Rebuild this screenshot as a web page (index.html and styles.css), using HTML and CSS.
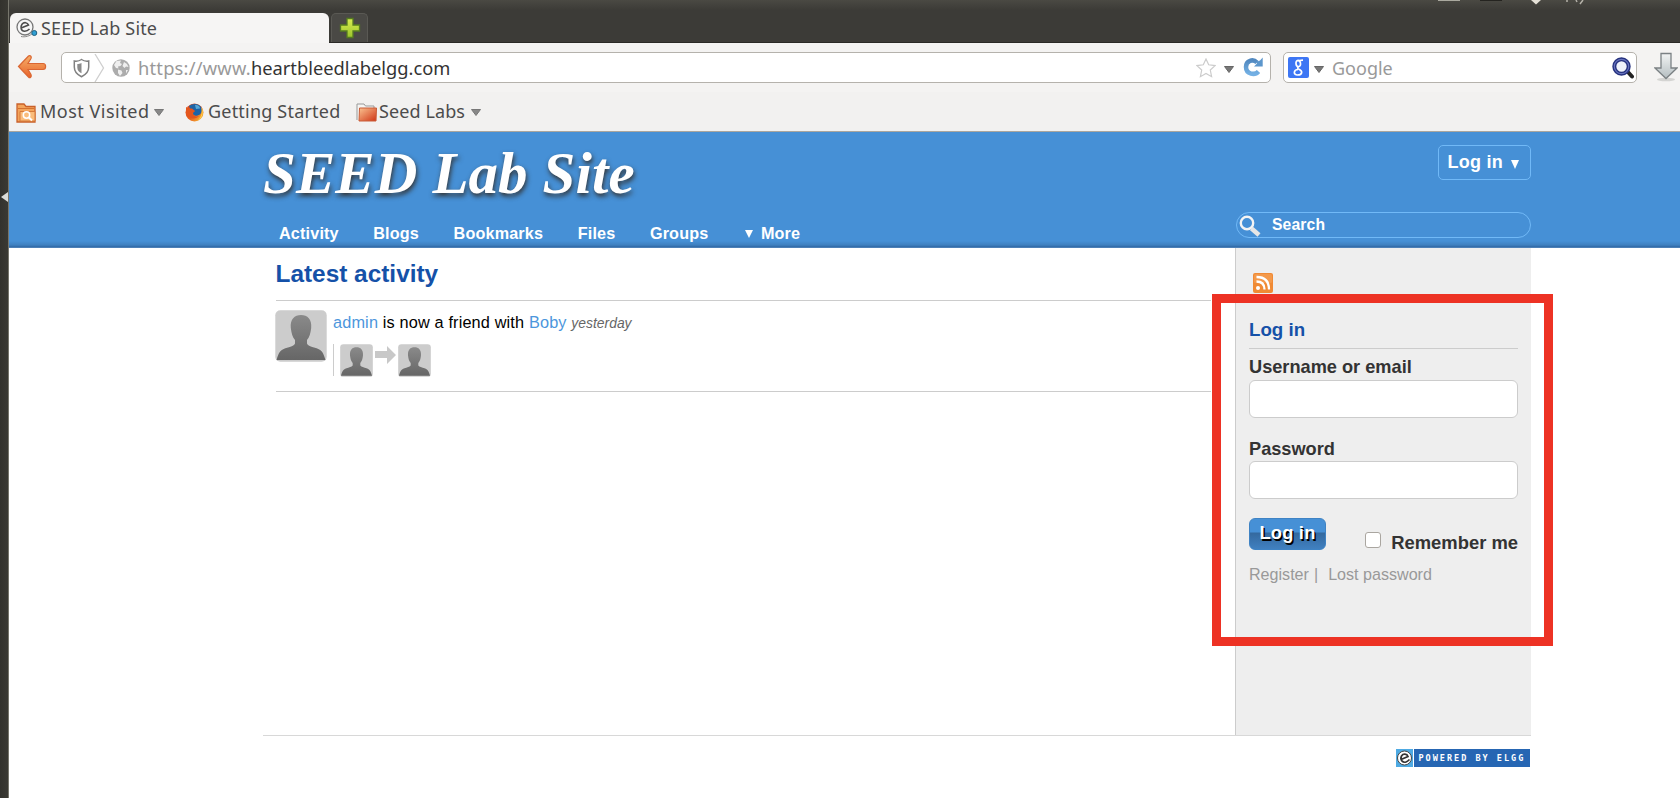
FILE: index.html
```html
<!DOCTYPE html>
<html lang="en">
<head>
<meta charset="utf-8">
<title>SEED Lab Site</title>
<link rel="stylesheet" href="styles.css">
</head>
<body>
<svg class="defs" width="0" height="0">
  <defs>
    <linearGradient id="gPerson" x1="0" y1="0" x2="0" y2="1"><stop offset="0" stop-color="#8a8a8a"/><stop offset="1" stop-color="#666"/></linearGradient>
    <linearGradient id="gOrange" x1="0" y1="0" x2="0" y2="1"><stop offset="0" stop-color="#f6b06a"/><stop offset="1" stop-color="#e8622a"/></linearGradient>
    <linearGradient id="gFolder" x1="0" y1="0" x2="1" y2="1"><stop offset="0" stop-color="#fbc391"/><stop offset="1" stop-color="#cf3414"/></linearGradient>
    <linearGradient id="gGreen" x1="0" y1="0" x2="0" y2="1"><stop offset="0" stop-color="#d8ec50"/><stop offset="1" stop-color="#9cc52c"/></linearGradient>
    <linearGradient id="gGrey" x1="0" y1="0" x2="0" y2="1"><stop offset="0" stop-color="#f2f4f4"/><stop offset="1" stop-color="#b4bdc0"/></linearGradient>
    <linearGradient id="gBlue" x1="0" y1="0" x2="0" y2="1"><stop offset="0" stop-color="#5289c0"/><stop offset="1" stop-color="#73b0e4"/></linearGradient>
    <linearGradient id="gFox" x1="0" y1="0" x2="1" y2="1"><stop offset="0" stop-color="#d9401c"/><stop offset=".55" stop-color="#e8611d"/><stop offset="1" stop-color="#f9ca3c"/></linearGradient>
    <symbol id="avatar" viewBox="0 0 52 52">
      <rect x=".3" y=".3" width="51.4" height="51.4" rx="5" fill="#ccc"/>
      <path d="M1.5 50C4 42 5 39.500 13 37.500C18 36 19.500 35 20 33.500V30C17.500 27 16.500 23.500 15.800 18C15 9 19.500 5 26 5S37 9 36.200 18C35.500 23.500 34.500 27 32 30V33.500C32.500 35 34 36 39 37.500C47 39.500 48 42 50.500 50Z" fill="url(#gPerson)"/>
    </symbol>
  </defs>
</svg>
<div class="desktop">
  <div class="edge"><svg class="edge-mark" width="7" height="10" viewBox="0 0 7 10"><path d="M7 0V10L0 5Z" fill="#dcdcd8"/></svg></div>
  <div class="window">
    <div class="tabstrip">
      <div class="tab">
        <svg width="22" height="20" viewBox="0 0 22 20"><circle cx="9" cy="9" r="8" fill="#f7f7f7" stroke="#777" stroke-width="1.300"/><path d="M4.500 10.200L12.500 7C11.500 4.300 8 3.800 6 6.200C4 9 5 13 8.500 13.200C10.500 13.300 12 12.500 13.500 11" fill="none" stroke="#4c4c4c" stroke-width="1.600"/><path d="M5 18.500C9 19.500 14 18 17 15" stroke="#888" fill="none"/><circle cx="18.300" cy="15" r="2.500" fill="#2f9fd4" stroke="#21617f"/></svg>
        <span>SEED Lab Site</span>
      </div>
      <div class="newtab"><svg width="22" height="22" viewBox="0 0 22 22"><path d="M8 1.500H14V8H20.500V14H14V20.500H8V14H1.500V8H8Z" fill="url(#gGreen)" stroke="#557b21" stroke-width="1.300"/></svg></div>
      <div class="tray">
        <svg width="150" height="5" viewBox="0 0 150 5"><path d="M0 0H22V1H0Z" fill="#aaa99f"/><path d="M42 0H64V1H42Z" fill="#252420"/><path d="M93 0H103L98 4.500Z" fill="#e5e1d7"/><path d="M129 0V2M138 0L139 2M145 0L142 4" stroke="#b4b1a8" stroke-width="1.500"/></svg>
      </div>
    </div>
    <div class="navbar">
      <svg class="back" width="30" height="26" viewBox="0 0 30 26"><path d="M1.500 12.500L11.500 2C13 .8 15 2.500 14 4.500L11 9.500H26C29.500 9.500 29.500 15.500 26 15.500H11L14 20.500C15 23 13 24.500 11.500 23Z" fill="url(#gOrange)" stroke="#da6632" stroke-width="1.200"/></svg>
      <div class="urlbar">
        <svg class="identity" width="58" height="28" viewBox="0 0 58 28">
          <path d="M19.500 5.500C17 7.200 14 7.300 12.300 7V13C12.300 18 15.500 20.800 19.500 22.700C23.500 20.800 26.700 18 26.700 13V7C25 7.300 22 7.200 19.500 5.500Z" fill="#fff" stroke="#808080" stroke-width="1.500"/><path d="M19.500 9C18 9.900 16.500 10 15.300 10V13.500C15.300 16.500 17 18 19.500 19.300Z" fill="#8a8a8a"/>
          <path d="M33 0L41.500 14L33 28" fill="none" stroke="#cfcfcf" stroke-width="1.300"/>
        </svg>
        <svg class="globe" width="18" height="18" viewBox="0 0 18 18"><circle cx="9" cy="9" r="8.700" fill="#acacac"/><path d="M4.500 2L9 1.500L8 4L10 5L8.500 7L6 7.500L6.500 9.500L4 9L2 6ZM12 3L15 5L16.500 8L14 7.500L12.500 9L10.500 7ZM6 10.500L9.500 11.500L10.500 14L8 17L6 14ZM14 11L16 11L14 14.500Z" fill="#efefef"/></svg>
        <span class="url"><span class="scheme">https://www.</span><span class="host">heartbleedlabelgg.com</span></span>
        <svg class="star" width="20" height="20" viewBox="0 0 20 20"><path d="M10 1L12.700 6.800L19 7.600L14.300 12L15.600 18.700L10 15.500L4.400 18.700L5.700 12L1 7.600L7.300 6.800Z" fill="#fff" stroke="#ccc" stroke-width="1.200"/></svg>
        <svg class="caret" width="10" height="7" viewBox="0 0 10 7"><path d="M.5 .5H9.500L5 6.500Z" fill="#777" stroke="#666"/></svg>
        <svg class="reload" width="21" height="20" viewBox="0 0 21 20"><path d="M15.500 14.500C12 18.500 3 17.500 3 10C3 3.500 10 1.500 14 5.500" fill="none" stroke="url(#gBlue)" stroke-width="4.500"/><path d="M19.700 .5V9.500H11L14 6.500L13 5L17 3.500Z" fill="#5c96cc"/></svg>
      </div>
      <div class="searchbar">
        <svg width="21" height="21" viewBox="0 0 21 21"><rect width="21" height="21" rx="2" fill="#3d76f4"/><path d="M10 3.300C13 3.600 13.500 9.500 10.500 9.600C7.500 9.700 7 3.500 10 3.300ZM10 12.500C5.500 12.500 5 18 9.500 18C14.500 18 15 14 11 12.200C9 11.300 9.500 10.500 10.500 10M11.500 3.500L15 3.200" fill="none" stroke="#fff" stroke-width="1.700"/></svg>
        <svg class="engine-caret" width="10" height="7" viewBox="0 0 10 7"><path d="M.5 .5H9.500L5 6.500Z" fill="#777" stroke="#666"/></svg>
        <span class="placeholder">Google</span>
        <svg class="lens" width="22" height="22" viewBox="0 0 22 22"><path d="M15 14L20 19.500" stroke="#222" stroke-width="4" stroke-linecap="round"/><circle cx="9.500" cy="9.500" r="7.200" fill="#eef2fa" stroke="#25317e" stroke-width="4"/><circle cx="9.500" cy="9.500" r="7.200" fill="none" stroke="#6673bd" stroke-width="1.200"/></svg>
      </div>
      <svg class="download" width="24" height="30" viewBox="0 0 24 30"><ellipse cx="12" cy="27.500" rx="9" ry="1.800" fill="#d4d4d2"/><path d="M7 1.500H17V16H23L12 26.500L1 16H7Z" fill="url(#gGrey)" stroke="#7b8184" stroke-width="1.300"/></svg>
    </div>
    <div class="bookmarks">
      <svg width="20" height="20" viewBox="0 0 20 20"><path d="M1 19V1H8L10 3.500H19V19Z" fill="#f3a45b" stroke="#c9602a" stroke-width="1.300"/><path d="M2 5.500H18" stroke="#d5712f"/><path d="M4 18V8.500H19V18Z" fill="#fabd7c" stroke="#d67a3a"/><circle cx="10.500" cy="12" r="3.200" fill="none" stroke="#fff" stroke-width="1.500"/><path d="M13 14.500L16 17.500" stroke="#fff" stroke-width="2"/></svg>
      <span class="bm bm-visited">Most Visited</span>
      <svg class="bm-caret" width="10" height="7" viewBox="0 0 10 7"><path d="M.5 .5H9.500L5 6.500Z" fill="#888" stroke="#777"/></svg>
      <svg class="fox" width="19" height="19" viewBox="0 0 19 19"><circle cx="9.500" cy="9.500" r="9" fill="url(#gFox)"/><path d="M4 3C7 0 15 0 16.500 5C18 10 14 13.500 10 12.500C7 11.500 8 9 10 8L5.500 6.500Z" fill="#1e63a5"/><path d="M10 2C12.500 1.500 15 3 15 5.500L11 6Z" fill="#55a7d7"/><path d="M1 4L4 5.500L7 5.500L10 8L7 10C8 13 11 14 14 13C11 17 3 16 1 11Z" fill="#e4561d"/><path d="M17 5C19 10 17 15 13 17.500C17 13 17 9 16.500 5Z" fill="#ffd44b"/></svg>
      <span class="bm bm-start">Getting Started</span>
      <svg class="folder" width="22" height="19" viewBox="0 0 22 19"><path d="M1 17V1H8L9.500 3H18V6" fill="#f5f5f3" stroke="#999"/><path d="M3 18L3.500 5H20.500L20 18Z" fill="url(#gFolder)" stroke="#c95c38"/></svg>
      <span class="bm bm-seed">Seed Labs</span>
      <svg class="bm-caret" width="10" height="7" viewBox="0 0 10 7"><path d="M.5 .5H9.500L5 6.500Z" fill="#888" stroke="#777"/></svg>
    </div>
    <div class="page">
      <header class="site-header">
        <div class="inner">
          <div class="brand">
            <h1>SEED Lab Site</h1>
            <nav><a>Activity</a><a>Blogs</a><a>Bookmarks</a><a>Files</a><a>Groups</a><a class="more"><svg width="8" height="8" viewBox="0 0 8 8"><path d="M0 0H8L4 8Z" fill="#fff"/></svg>More</a></nav>
          </div>
          <div class="account">
            <a class="login-drop">Log in<svg width="8" height="9" viewBox="0 0 8 9"><path d="M0 0H8L4 9Z" fill="#fff"/></svg></a>
            <div class="search"><svg width="22" height="22" viewBox="0 0 22 22"><path d="M12.500 13.500L20 20" stroke="#e6e6e6" stroke-width="4.500"/><circle cx="8" cy="8" r="6.200" fill="none" stroke="#f4f4f4" stroke-width="2.400"/></svg><span>Search</span></div>
          </div>
        </div>
      </header>
      <div class="layout">
        <main>
          <h2>Latest activity</h2>
          <div class="river">
            <svg width="52" height="52"><use href="#avatar"/></svg>
            <div class="entry">
              <p><a>admin</a> is now a friend with <a>Boby</a> <i>yesterday</i></p>
              <div class="friends">
                <svg width="33" height="33"><use href="#avatar"/></svg>
                <svg class="arrow" width="21" height="18" viewBox="0 0 21 18"><path d="M0 5H12V0L21 9L12 18V12H0Z" fill="#c8c8c8"/></svg>
                <svg width="33" height="33"><use href="#avatar"/></svg>
              </div>
            </div>
          </div>
        </main>
        <aside>
          <svg class="rss" width="20" height="20" viewBox="0 0 20 20"><rect width="20" height="20" rx="2" fill="#f08a34"/><rect x="1" y="1" width="18" height="9" rx="1.500" fill="#f4994a"/><circle cx="5" cy="15" r="2" fill="#fff"/><path d="M3.500 8.500C8.500 8.500 11.500 11.500 11.500 16.500M3.500 4C11.500 4 16 8.500 16 16.500" fill="none" stroke="#fff" stroke-width="2.300"/></svg>
          <form>
            <h3>Log in</h3>
            <label class="lbl">Username or email</label>
            <input class="field" type="text">
            <label class="lbl second">Password</label>
            <input class="field field-second" type="password">
            <div class="actions">
              <button type="button">Log in</button>
              <span class="remember"><span class="check"></span>Remember me</span>
            </div>
            <p class="links"><span>Register</span><span class="bar">|</span><span>Lost password</span></p>
          </form>
        </aside>
      </div>
      <footer>
        <div class="badge"><svg width="17" height="18" viewBox="0 0 17 18"><rect width="17" height="18" fill="#4eaae3"/><circle cx="8.500" cy="9" r="7" fill="#fff" stroke="#444"/><path d="M5 10.500L12 7.500C11 4.500 7 4.500 5.500 7C3.500 11 7 14 10 13C11.500 12.500 12.500 11.500 13.500 10.500" fill="none" stroke="#333" stroke-width="1.700"/></svg><span>POWERED BY ELGG</span></div>
      </footer>
    </div>
  </div>
  <div class="highlight"></div>
</div>
</body>
</html>
```

FILE: styles.css
```css
* { box-sizing: border-box; }
body { margin: 0; font-family: "Liberation Sans", Arial, sans-serif; background: #fff; overflow: hidden; }
svg { display: block; flex: none; }
h1, h2, h3, p { margin: 0; }
.defs { position: absolute; }
.desktop { position: relative; display: flex; width: 1680px; height: 798px; overflow: hidden; }
.edge { width: 9px; flex: none; background: linear-gradient(90deg, #33322d, #3a3933); border-right: 1px solid #77766c; padding: 192px 0 0 1px; }
.window { flex: 1; min-width: 0; display: flex; flex-direction: column; }

.tabstrip { height: 43px; display: flex; align-items: flex-end; background: linear-gradient(#4a4943, #3c3b37 10px); border-bottom: 1px solid #2a2926; }
.tab { width: 319px; height: 30px; margin: 0 2px -1px 1px; display: flex; align-items: center; gap: 3px; padding-left: 6px; background: #f6f5f4; border-radius: 6px 6px 0 0; font: 18px/29px "Noto Sans", sans-serif; color: #4c4c4c; letter-spacing: .15px; }
.newtab { width: 37px; height: 29px; padding: 3px 0 0 7px; background: #4a4945; border: 1px solid #5a5954; border-bottom: 0; border-radius: 5px 5px 0 0; }
.tray { margin-left: auto; align-self: flex-start; width: 242px; }

.navbar { height: 49px; flex: none; display: flex; align-items: flex-start; padding-top: 9px; background: #f4f3f2; font: 18px/28px "Noto Sans", sans-serif; }
.back { margin: 2px 0 0 8px; }
.urlbar, .searchbar { height: 31px; flex: none; display: flex; align-items: center; background: #fff; border: 1.500px solid #b5b2ac; border-radius: 5px; }
.urlbar { width: 1210px; margin-left: 14px; overflow: hidden; }
.globe { margin-left: -8px; }
.url { margin-left: 8px; font-size: 18.300px; flex: 1; white-space: nowrap; }
.scheme { color: #999; letter-spacing: .22px; }
.host { color: #333; }
.star { margin-right: 8px; }
.caret { margin: 4px 9px 0 0; }
.reload { margin: -2px 6px 0 0; }
.searchbar { width: 354px; margin-left: 12px; padding-left: 4px; }
.engine-caret { margin: 4px 0 0 5px; }
.placeholder { margin-left: 8px; color: #999; flex: 1; }
.lens { margin-right: 2px; }
.download { margin: 0 0 0 17px; }

.bookmarks { height: 40px; flex: none; display: flex; align-items: flex-start; padding: 11px 0 0 7px; background: #f2f1f0; border-bottom: 1px solid #aaa69e; color: #4c4c4c; font: 18px/20px "Noto Sans", sans-serif; white-space: nowrap; }
.bm { line-height: 17px; }
.bm-visited { margin-left: 4px; width: 108px; letter-spacing: .5px; }
.bm-caret { margin: 6px 0 0 6px; }
.fox { margin-left: 21px; }
.bm-start { margin-left: 4px; width: 133px; letter-spacing: .2px; }
.folder { margin: 0 1px 0 15px; }
.bm-seed { width: 86px; letter-spacing: .1px; }

.page { flex: 1; background: #fff; }
.site-header { height: 116px; background: linear-gradient(#4690d6 109px, #3f80c0 113px, #2f67a4 115px, #6a97c7 116px); color: #fff; }
.inner { width: 1268px; margin-left: 254px; display: flex; justify-content: space-between; }
.brand { padding-top: 8px; }
h1 { font: italic bold 59px/67px "Liberation Serif", "Times New Roman", serif; letter-spacing: .1px; text-shadow: 1px 3px 5px #333; white-space: nowrap; }
nav { display: flex; margin: 15px 0 0 16px; font: bold 16.200px/22px "Liberation Sans", sans-serif; letter-spacing: .16px; }
nav a { margin-right: 34.500px; }
nav .more { display: flex; align-items: center; gap: 8px; margin-left: 2px; }
.more svg { margin-top: 2px; }
.account { display: flex; flex-direction: column; align-items: flex-end; padding-top: 13px; }
.login-drop { width: 93px; height: 35px; display: flex; align-items: center; gap: 8px; padding-left: 8.500px; border: 1.500px solid #71b9f7; border-radius: 5px; font: bold 18px/33px "Liberation Sans", sans-serif; letter-spacing: .25px; }
.login-drop svg { margin-top: 4px; }
.search { width: 295px; height: 26px; margin-top: 32px; display: flex; align-items: center; border: 1.500px solid #71b9f7; border-radius: 13px; padding-left: 2px; font: bold 15.700px/24px "Liberation Sans", sans-serif; }
.search svg { margin-top: 2px; }
.search span { margin-left: 11px; letter-spacing: .15px; }

.layout { width: 1268px; height: 488px; margin-left: 254px; display: flex; border-bottom: 1px solid #d8d8d8; }
main { width: 972px; padding: 12px 24px 0 12.500px; }
h2 { height: 41px; font-size: 24.400px; line-height: 28px; color: #1551a8; border-bottom: 1px solid #ccc; }
.river { display: flex; padding-top: 9px; height: 91px; border-bottom: 1px solid #ccc; }
.river > svg { margin-left: -.5px; }
.entry { margin-left: 6px; padding-top: 2px; font-size: 16.300px; line-height: 20px; color: #000; }
.entry p { letter-spacing: .15px; }
.entry a { color: #4c96dc; }
.entry i { font-size: 13.900px; color: #666; letter-spacing: 0; }
.friends { display: flex; margin-top: 11px; height: 32px; padding-left: 6px; border-left: 1px solid #ccc; }
.arrow { margin: 2px 2px 0; }
aside { width: 296px; background: #eee; border-left: 1px solid #ccc; padding: 25px 13px 0; }
.rss { margin-left: 3.500px; }
form { padding-top: 26px; }
h3 { height: 30px; font-size: 18.700px; line-height: 22px; color: #1551a8; border-bottom: 1px solid #ccc; }
.lbl { display: block; font-weight: bold; font-size: 18.200px; line-height: 22px; padding-top: 7px; color: #333; }
.field { display: block; width: 269px; height: 38px; margin: 2px 0 0; border: 1px solid #ccc; border-radius: 6px; background: #fff; }
.second { margin-top: 13px; }
.field-second { margin-top: 1px; }
.actions { display: flex; justify-content: space-between; width: 269px; margin-top: 19px; height: 32px; }
button { width: 77px; height: 32px; padding: 0 0 3px; border: 1px solid #3f83c4; border-radius: 6px; background: linear-gradient(#4690d6 0 13px, #34699f 14px, #4080c0 30px); color: #fff; font: bold 18.300px/24px "Liberation Sans", sans-serif; text-shadow: 1.500px 1.500px 0 #000; letter-spacing: .2px; }
.remember { display: flex; white-space: nowrap; font-weight: bold; font-size: 18.400px; line-height: 22px; padding-top: 14px; color: #333; }
.check { width: 16px; height: 16px; margin-right: 10px; border: 1.500px solid #aaa6a0; border-radius: 3px; background: #fff; }
.links { display: flex; margin-top: 14px; font-size: 16.100px; line-height: 20px; color: #999; white-space: nowrap; }
.bar { margin: 0 10px 0 5px; }

footer { width: 1268px; margin-left: 254px; display: flex; justify-content: flex-end; padding: 13px 1.500px 0 0; }
.badge { width: 134px; height: 18px; display: flex; gap: 1px; }
.badge span { flex: 1; padding-left: 5px; background: #2666b3; color: #fff; font: bold 8.500px/18px "DejaVu Sans Mono", monospace; letter-spacing: 2px; white-space: nowrap; overflow: hidden; }

.highlight { position: absolute; left: 1212px; top: 294px; width: 341px; height: 352px; border: 9px solid #ed3224; }
```
